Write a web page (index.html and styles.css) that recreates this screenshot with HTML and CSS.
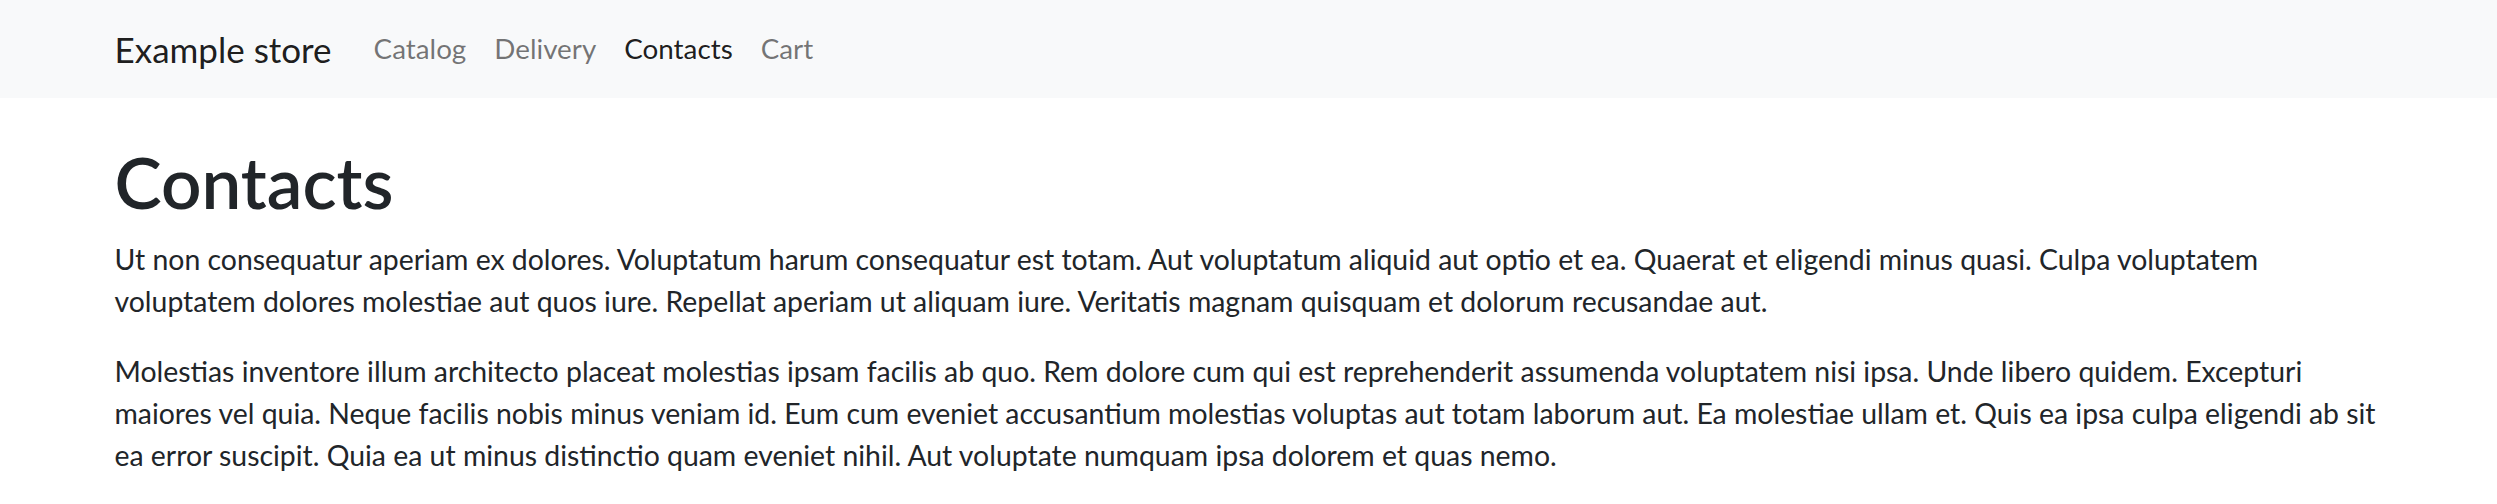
FILE: index.html
```html
<!DOCTYPE html>
<html lang="en">
<head>
<meta charset="utf-8">
<title>Contacts - Example store</title>
<link rel="stylesheet" href="styles.css">
</head>
<body>
<nav class="navbar">
  <div class="container nav-inner">
    <a class="brand" href="#">Example store</a>
    <ul class="nav-links">
      <li><a class="nav-link" href="#">Catalog</a></li>
      <li><a class="nav-link" href="#">Delivery</a></li>
      <li><a class="nav-link active" href="#">Contacts</a></li>
      <li><a class="nav-link" href="#">Cart</a></li>
    </ul>
  </div>
</nav>
<main class="container content">
  <h1 class="title">Contacts</h1>
  <p class="para">Ut non consequatur aperiam ex dolores. Voluptatum harum consequatur est totam. Aut voluptatum aliquid aut optio et ea. Quaerat et eligendi minus quasi. Culpa voluptatem voluptatem dolores molestiae aut quos iure. Repellat aperiam ut aliquam iure. Veritatis magnam quisquam et dolorum recusandae aut.</p>
  <p class="para">Molestias inventore illum architecto placeat molestias ipsam facilis ab quo. Rem dolore cum qui est reprehenderit assumenda voluptatem nisi ipsa. Unde libero quidem. Excepturi maiores vel quia. Neque facilis nobis minus veniam id. Eum cum eveniet accusantium molestias voluptas aut totam laborum aut. Ea molestiae ullam et. Quis ea ipsa culpa eligendi ab sit ea error suscipit. Quia ea ut minus distinctio quam eveniet nihil. Aut voluptate numquam ipsa dolorem et quas nemo.</p>
</main>
</body>
</html>
```
FILE: styles.css
```css
* { box-sizing: border-box; }
html, body { margin: 0; padding: 0; }
body {
  font-family: Lato, "Liberation Sans", sans-serif;
  font-size: 28.4px;
  line-height: 42px;
  color: #212529;
  background: #fff;
}
.container {
  width: 100%;
  max-width: 2310px;
  margin: 0 auto;
  padding: 0 21px;
}
.navbar {
  background: #f8f9fa;
  padding: 14px 0;
}
.nav-inner {
  display: flex;
  align-items: center;
}
.brand {
  font-size: 35px;
  line-height: 52.5px;
  padding: 8.75px 0;
  margin-right: 28px;
  color: rgba(0,0,0,.9);
  text-decoration: none;
  white-space: nowrap;
}
.nav-links {
  display: flex;
  list-style: none;
  margin: 0;
  padding: 0;
}
.nav-link {
  display: block;
  padding: 14px;
  font-size: 27.8px;
  color: rgba(0,0,0,.55);
  text-decoration: none;
}
.nav-link.active { color: rgba(0,0,0,.9); }
.content { padding-top: 42px; }
.title {
  font-size: 71px;
  font-weight: 600;
  line-height: 84px;
  margin: 0 0 14px;
}
.para { margin: 0 0 28px; }
```
